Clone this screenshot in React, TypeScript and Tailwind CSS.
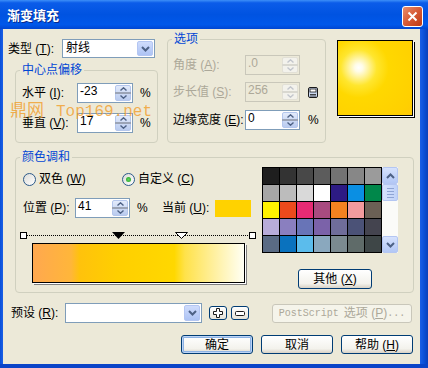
import type { ReactNode } from 'react'

const PALETTE = [
  ['#1e1e1e', '#333333', '#484848', '#5c5c5c', '#737373', '#878787', '#9b9b9b'],
  ['#a6a6a6', '#bcbcbc', '#d9d9d9', '#ffffff', '#2d1b84', '#0a8fe3', '#00874a'],
  ['#fff200', '#ec4a1c', '#e72b74', '#a94b80', '#f58220', '#f29b9e', '#6b6055'],
  ['#b8acd9', '#8a7fbf', '#6874b7', '#7b62a9', '#6f6d9a', '#4b5277', '#44444f'],
  ['#5a6b84', '#0a72be', '#5bbcec', '#8aa8be', '#7b8a90', '#5f6b69', '#3e4647'],
]

function K({ c }: { c: string }) {
  return <span className="underline underline-offset-[1px]">{c}</span>
}

function Chevron({ up, color }: { up?: boolean; color: string }) {
  return (
    <svg width="7" height="4" viewBox="0 0 7 4">
      <path d={up ? 'M0.5 3.5L3.5 0.8L6.5 3.5' : 'M0.5 0.5L3.5 3.2L6.5 0.5'} stroke={color} strokeWidth="1.4" fill="none" />
    </svg>
  )
}

function SpinArrows({ disabled }: { disabled?: boolean }) {
  const c = disabled ? '#c3c6cc' : '#4d6185'
  return (
    <div
      className={`my-px mr-px flex w-[16px] flex-col rounded-[2px] border ${
        disabled ? 'border-[#e2e0d6] bg-[#f3f2ec]' : 'border-[#b4c6ec] bg-[linear-gradient(to_bottom,#e3ebfb,#b9cbef)]'
      }`}
    >
      <div className="flex flex-1 items-center justify-center">
        <Chevron up color={c} />
      </div>
      <div className={`-mx-px h-[2px] ${disabled ? 'bg-[#d9d8d0]' : 'bg-[#9ba4b6]'}`} />
      <div className="flex flex-1 items-center justify-center">
        <Chevron color={c} />
      </div>
    </div>
  )
}

function SpinInput({ value, disabled, w = 'w-[56px]' }: { value: string; disabled?: boolean; w?: string }) {
  return (
    <div className={`flex h-[20px] ${w} border ${disabled ? 'border-[#c9c7ba] bg-[#ece9d8]' : 'border-[#7f9db9] bg-white'}`}>
      <span className={`flex-1 pl-[2px] text-[12px] leading-[15px] ${disabled ? 'text-[#aca899]' : 'text-black'}`}>{value}</span>
      <SpinArrows disabled={disabled} />
    </div>
  )
}

function DropButton() {
  return (
    <div className="my-px mr-px flex w-[16px] items-center justify-center rounded-[2px] border border-[#b4c6f2] bg-[linear-gradient(to_bottom,#cfdcfc,#adc3f4)]">
      <svg width="9" height="6" viewBox="0 0 9 6">
        <path d="M1 1L4.5 4.5L8 1" stroke="#4d6185" strokeWidth="2" fill="none" />
      </svg>
    </div>
  )
}

function Combo({ text, w, h }: { text: string; w: string; h: string }) {
  return (
    <div className={`flex ${w} ${h} border border-[#7f9db9] bg-white`}>
      <span className="flex-1 pl-[3px] text-[12px] leading-[16px]">{text}</span>
      <DropButton />
    </div>
  )
}

function Radio({ on, children }: { on?: boolean; children: ReactNode }) {
  return (
    <div className="flex items-center gap-[3px]">
      <span className="flex h-[13px] w-[13px] items-center justify-center rounded-full border border-[#2c5a8a] bg-[linear-gradient(135deg,#dcdcd7,#ffffff)]">
        {on && <span className="h-[5px] w-[5px] rounded-full bg-[radial-gradient(circle,#5fd65f,#219e21)]" />}
      </span>
      <span>{children}</span>
    </div>
  )
}

function XpButton({ children, def, w, h = 'h-[19px]' }: { children: ReactNode; def?: boolean; w: string; h?: string }) {
  return (
    <div
      className={`flex ${w} ${h} items-center justify-center rounded-[3px] border border-[#003c74] bg-[linear-gradient(to_bottom,#ffffff,#f3f2ec_75%,#d8d2c6)] text-[12px] ${
        def ? 'shadow-[inset_0_0_0_1px_#bcd4f6,inset_0_0_0_2px_#8db2e3]' : ''
      }`}
    >
      {children}
    </div>
  )
}

function Group({ title, className, children }: { title: string; className: string; children?: ReactNode }) {
  return (
    <fieldset className={`rounded-[4px] border border-[#d0d0bf] ${className}`}>
      <legend className="ml-[4px] px-[2px] text-[12px] leading-[14px] text-[#0046d5]">{title}</legend>
      {children}
    </fieldset>
  )
}

function ScrollBtn({ up }: { up?: boolean }) {
  return (
    <div className="flex h-[17px] items-center justify-center rounded-[2px] border border-[#b4c6f2] bg-[linear-gradient(to_bottom,#d6e2fd,#b2c7f5)]">
      <svg width="9" height="6" viewBox="0 0 9 6">
        <path d={up ? 'M1 5L4.5 1.5L8 5' : 'M1 1L4.5 4.5L8 1'} stroke="#4d6185" strokeWidth="2" fill="none" />
      </svg>
    </div>
  )
}

export default function App() {
  return (
    <div className="flex h-[368px] w-[428px] flex-col overflow-hidden font-['Liberation_Sans','Noto_Sans_CJK_SC',sans-serif] text-[12px] text-black">
      {/* title bar */}
      <div className="flex h-[29px] items-center justify-between bg-[linear-gradient(to_bottom,#3d8ff8_0%,#0b5ce9_10%,#0053e1_50%,#0058ea_85%,#0046d2_100%)] pl-[7px] pr-[5px] pt-[3px]">
        <span className="text-[13px] font-bold text-white [text-shadow:1px_1px_0_#0b2a8a]">渐变填充</span>
        <div className="flex h-[21px] w-[21px] items-center justify-center rounded-[3px] border border-white bg-[linear-gradient(135deg,#ea8e6c,#d65a36_50%,#bf3a14)]">
          <svg width="11" height="11" viewBox="0 0 11 11">
            <path d="M1.5 1.5L9.5 9.5M9.5 1.5L1.5 9.5" stroke="white" strokeWidth="2" />
          </svg>
        </div>
      </div>

      <div className="flex flex-1">
        <div className="w-[3px] bg-[linear-gradient(to_right,#0a4fd8,#1a5fe6)]" />

        <div className="relative flex flex-1 flex-col bg-[#ece9d8] pt-[3px]">
          {/* top section */}
          <div className="flex items-start">
            <div className="ml-[5px] mt-[7px] flex w-[150px] flex-col">
              <div className="flex h-[19px] items-center">
                <span className="w-[54px]">
                  类型 (<K c="T" />):
                </span>
                <Combo text="射线" w="w-[93px]" h="h-[19px]" />
              </div>
              <Group title="中心点偏移" className="ml-[7px] mt-[5px] h-[80px] w-[143px]">
                <div className="mt-[6px] flex items-center pl-[6px]">
                  <span className="w-[55px]">
                    水平 (<K c="I" />):
                  </span>
                  <SpinInput value="-23" />
                  <span className="ml-[7px]">%</span>
                </div>
                <div className="mt-[10px] flex items-center pl-[6px]">
                  <span className="w-[55px]">
                    垂直 (<K c="V" />):
                  </span>
                  <SpinInput value="17" />
                  <span className="ml-[7px]">%</span>
                </div>
              </Group>
            </div>

            <Group title="选项" className="ml-[9px] h-[111px] w-[159px]">
              <div className="mt-[9px] flex items-center pl-[5px]">
                <span className="w-[72px] text-[#aca899]">
                  角度 (<K c="A" />):
                </span>
                <SpinInput value=".0" disabled w="w-[55px]" />
              </div>
              <div className="mt-[7px] flex items-center pl-[5px]">
                <span className="w-[72px] text-[#aca899]">
                  步长值 (<K c="S" />):
                </span>
                <SpinInput value="256" disabled w="w-[55px]" />
                <svg className="ml-[7px]" width="12" height="13" viewBox="0 0 12 13">
                  <rect x="1.5" y="1.5" width="9" height="10" rx="1.5" fill="#c9d6ee" stroke="#1a1a1a" />
                  <rect x="3" y="3" width="6" height="3" fill="#ffffff" stroke="#1a1a1a" strokeWidth="0.8" />
                  <path d="M3 8.5H9M3 10H9" stroke="#1a1a1a" strokeWidth="0.8" />
                </svg>
              </div>
              <div className="mt-[8px] flex items-center pl-[5px]">
                <span className="w-[72px]">
                  边缘宽度 (<K c="E" />):
                </span>
                <SpinInput value="0" w="w-[55px]" />
                <span className="ml-[8px]">%</span>
              </div>
            </Group>

            <div className="ml-[11px] mt-[8px] h-[76px] w-[76px] border border-black bg-[radial-gradient(circle_at_28%_36%,#ffffff_0px,#fffce8_4px,#fff39a_10px,#ffe62e_18px,#ffd800_30px,#ffd000_60px,#ffc20e_85px,#ffa33a_110px)] shadow-[1px_1px_0_#ffffff,2px_2px_0_#000000]" />
          </div>

          {/* colour blend */}
          <Group title="颜色调和" className="ml-[12px] mt-[7px] h-[143px] w-[399px]">
            <div className="flex">
              <div className="flex w-[246px] flex-col">
                <div className="mt-[6px] flex items-center pl-[7px]">
                  <div className="w-[99px]">
                    <Radio>
                      双色 (<K c="W" />)
                    </Radio>
                  </div>
                  <Radio on>
                    自定义 (<K c="C" />)
                  </Radio>
                </div>
                <div className="mt-[10px] flex items-center pl-[7px]">
                  <span className="w-[52px]">
                    位置 (<K c="P" />):
                  </span>
                  <SpinInput value="41" w="w-[55px]" />
                  <span className="ml-[7px] w-[25px]">%</span>
                  <span className="w-[53px]">
                    当前 (<K c="U" />):
                  </span>
                  <div className="h-[17px] w-[36px] bg-[#ffd200]" />
                </div>
                <div className="relative ml-[4px] mt-[14px] h-[7px] w-[236px]">
                  <div className="absolute left-[6px] right-[6px] top-[3px] border-t border-dotted border-black" />
                  <div className="absolute left-0 top-0 h-[7px] w-[7px] border border-black bg-white" />
                  <div className="absolute right-0 top-0 h-[7px] w-[7px] border border-black bg-white" />
                  <svg className="absolute left-[92px] top-0" width="13" height="7" viewBox="0 0 13 7">
                    <path d="M0 0H13L6.5 7Z" fill="#000" />
                  </svg>
                  <svg className="absolute left-[155px] top-0" width="13" height="7" viewBox="0 0 13 7">
                    <path d="M0.5 0.5H12.5L6.5 6.5Z" fill="#fff" stroke="#000" />
                  </svg>
                </div>
                <div className="ml-[16px] mt-[4px] h-[40px] w-[213px] border border-black bg-[linear-gradient(to_right,#ffa84f_0%,#ffb63a_18%,#ffc20c_22%,#ffcf00_40%,#ffd800_67%,#ffe24a_72%,#fff0a0_86%,#fffff4_100%)] shadow-[1px_1px_0_#ffffff,2px_2px_0_#808080]" />
              </div>

              <div className="mt-[3px] flex flex-col">
                <div className="flex">
                  <div className="grid grid-cols-7 gap-px bg-black p-px">
                    {PALETTE.flat().map((c, i) => (
                      <div key={i} className="h-[16px] w-[16px]" style={{ backgroundColor: c }} />
                    ))}
                  </div>
                  <div className="flex w-[16px] flex-col bg-[#fbfbf8]">
                    <ScrollBtn up />
                    <div className="flex h-[17px] flex-col items-center justify-center gap-[2px] rounded-[2px] border border-[#b4c6f2] bg-[linear-gradient(to_right,#d6e2fd,#c0d2f8)]">
                      <div className="h-px w-[7px] bg-[#8ea4d4]" />
                      <div className="h-px w-[7px] bg-[#8ea4d4]" />
                      <div className="h-px w-[7px] bg-[#8ea4d4]" />
                      <div className="h-px w-[7px] bg-[#8ea4d4]" />
                    </div>
                    <div className="flex-1" />
                    <ScrollBtn />
                  </div>
                </div>
                <div className="ml-[36px] mt-[16px]">
                  <XpButton w="w-[74px]" h="h-[20px]">
                    其他 (<K c="X" />)
                  </XpButton>
                </div>
              </div>
            </div>
          </Group>

          {/* presets */}
          <div className="mt-[10px] flex items-center">
            <span className="ml-[8px] w-[54px]">
              预设 (<K c="R" />):
            </span>
            <Combo text="" w="w-[137px]" h="h-[20px]" />
            <div className="ml-[7px] flex h-[14px] w-[18px] items-center justify-center rounded-[3px] border border-[#003c74] bg-[linear-gradient(to_bottom,#ffffff,#e6e3d8)]">
              <svg width="10" height="10" viewBox="0 0 10 10">
                <path d="M3.5 0.5H6.5V3.5H9.5V6.5H6.5V9.5H3.5V6.5H0.5V3.5H3.5Z" fill="#fff" stroke="#1a1a1a" />
              </svg>
            </div>
            <div className="ml-[4px] flex h-[14px] w-[18px] items-center justify-center rounded-[3px] border border-[#003c74] bg-[linear-gradient(to_bottom,#ffffff,#e6e3d8)]">
              <svg width="10" height="5" viewBox="0 0 10 5">
                <rect x="0.5" y="0.5" width="9" height="4" rx="1" fill="#fff" stroke="#1a1a1a" />
              </svg>
            </div>
            <div className="ml-[23px] flex h-[19px] w-[140px] items-center justify-center rounded-[3px] border border-[#c9c7ba] bg-[#f5f4ea] text-[#aca899]">
              <span className="font-['Liberation_Mono','Noto_Sans_CJK_SC',monospace] text-[10px]">PostScript</span>
              <span className="ml-[5px]">
                选项 (<K c="P" />)
              </span>
              <span className="font-['Liberation_Mono',monospace] text-[10px]">...</span>
            </div>
          </div>

          {/* buttons */}
          <div className="mt-[12px] flex justify-end gap-[8px] pr-[7px]">
            <XpButton w="w-[72px]" def>
              确定
            </XpButton>
            <XpButton w="w-[72px]">取消</XpButton>
            <XpButton w="w-[72px]">
              帮助 (<K c="H" />)
            </XpButton>
          </div>

          {/* watermark */}
          <div className="pointer-events-none absolute left-[7px] top-[67px] flex items-baseline text-[#f29a1f]/75">
            <span className="font-['Noto_Sans_CJK_SC',sans-serif] text-[17px]">鼎网</span>
            <span className="ml-[12px] font-['Liberation_Mono',monospace] text-[16px]">Top169.net</span>
          </div>
        </div>

        <div className="w-[8px] bg-[linear-gradient(to_right,#1a5fe6,#0a4fd8_50%,#0a3fb8)]" />
      </div>
      <div className="h-[4px] bg-[#0a44c8]" />
    </div>
  )
}
